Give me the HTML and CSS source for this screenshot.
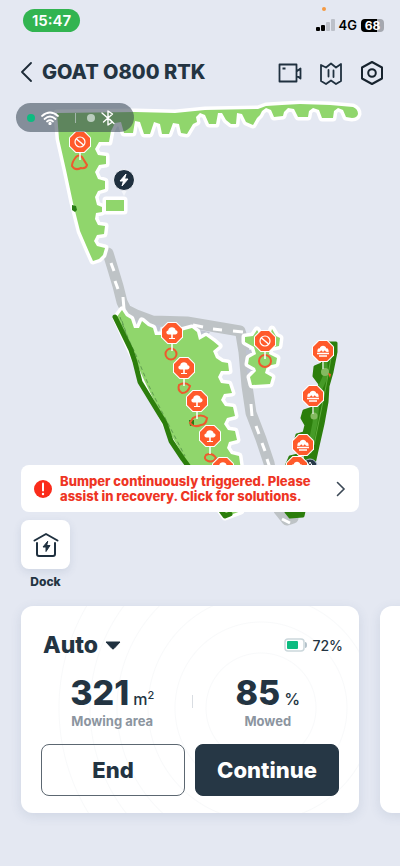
FILE: index.html
```html
<!DOCTYPE html>
<html lang="en">
<head>
    <meta charset="UTF-8">
    <meta name="viewport" content="width=device-width, initial-scale=1.0">
    <title>GOAT O800 RTK</title>
    <link rel="stylesheet" href="styles.css">
</head>
<body>
    <div class="status-bar">
        <span class="clock">15:47</span>
        <div class="status-right">
            <span class="mic-dot"></span>
            <div class="status-icons">
                <svg width="19" height="12" viewBox="0 0 19 12" aria-hidden="true">
                    <rect x="0" y="8" width="4" height="4" rx="1" fill="#000"/>
                    <rect x="5" y="6" width="4" height="6" rx="1" fill="#000"/>
                    <rect x="10" y="3" width="4" height="9" rx="1" fill="#bcc0c9"/>
                    <rect x="15" y="0" width="4" height="12" rx="1" fill="#bcc0c9"/>
                </svg>
                <span class="network">4G</span>
                <span class="phone-battery">68</span>
            </div>
        </div>
    </div>

    <header class="top-bar">
        <button class="icon-btn" aria-label="Back">
            <svg width="12" height="20" viewBox="0 0 12 20"><path d="M11 1 2 10l9 9" fill="none" stroke="#1d2b38" stroke-width="1.8" stroke-linecap="round" stroke-linejoin="round"/></svg>
        </button>
        <h1>GOAT O800 RTK</h1>
        <div class="actions">
            <button class="icon-btn" aria-label="Camera">
                <svg width="24" height="24" viewBox="0 0 24 24" fill="none" stroke="#1f303f" stroke-width="1.8" stroke-linejoin="round"><path d="M1.500 3.500h17v17h-17zM18.500 10.500l4-3v10l-4-3M4.500 7.500h3"/></svg>
            </button>
            <button class="icon-btn" aria-label="Map">
                <svg width="24" height="24" viewBox="0 0 24 24" fill="none" stroke="#1f303f" stroke-width="1.800" stroke-linejoin="round" stroke-linecap="round"><path d="M2 4l5 2.500 5-4 5 4L22 3v17l-5 3-5-3.500L7 23l-5-3z"/><path d="M9.500 9v6.500M14.500 9.500V16"/></svg>
            </button>
            <button class="icon-btn" aria-label="Settings">
                <svg width="24" height="26" viewBox="0 0 24 26" fill="none" stroke="#17232e" stroke-width="2" stroke-linejoin="round"><path d="M12 2l10 5.500v11L12 24 2 18.500v-11z"/><circle cx="12" cy="13" r="3.800"/></svg>
            </button>
        </div>
    </header>

    <main>
        <section class="map-area">
            <svg class="map" viewBox="0 96 400 434" role="img" aria-label="Lawn map">
                <defs>
                    <g id="sign">
                        <path d="M-4.500-11h9l6.500 6.500v9l-6.500 6.500h-9l-6.500-6.500v-9z" fill="#fff"/>
                        <path d="M-4-10h8l6 6v8l-6 6h-8l-6-6v-8z" fill="#ff5a2b"/>
                    </g>
                    <g id="sign-stop">
                        <path d="M0 9v9" stroke="#fff" stroke-width="1.500"/>
                        <use href="#sign"/>
                        <circle r="5" fill="none" stroke="#fff" stroke-width="1.200"/>
                        <path d="M-3.500-3 3.500 3" stroke="#fff" stroke-width="1.500"/>
                    </g>
                    <g id="sign-tree">
                        <path d="M0 9v9" stroke="#fff" stroke-width="1.500"/>
                        <use href="#sign"/>
                        <path d="M-.8 5V1.500H-3.500C-6.500 1-6-2.500-3.800-2.600-3.500-6.500 3-6.800 3.600-2.800 6.500-2.500 6 1.200 3.300 1.500H.8V5H3v1h-6V5z" fill="#fff"/>
                    </g>
                    <g id="sign-bush">
                        <path d="M0 9v9" stroke="#d6e6cf" stroke-width="1.500"/>
                        <use href="#sign"/>
                        <path d="M-5.500 1C-6-1-5-3-3.200-2.600-3-6 3-6 3.200-2.600 5-3 6-1 5.500 1L3 .8 1.800-.8 0 1-1.800-.8-3 .8z" fill="#fff"/>
                        <path d="M-6 2.500H6M-4 5H4" stroke="#fff" stroke-width="1.500"/>
                    </g>
                </defs>

                <!-- paths between the zones -->
                <g class="road">
                    <path d="M108 253l4 13 6 20 4 16 4 8 10 5 16 6 35 1 53 9"/>
                    <path d="M241 334l3 18 3 34 4 27 10 26 8 24 4 20 6 27 8 10 6-2"/>
                </g>
                <g class="road-line">
                    <path d="M111 263l3 8M115 281l3 8M123 297l1 12M193 325l10 2M213 329l9 1M233 331l10 1"/>
                    <path d="M251 404l1 12M256 426l3 8M262 443l3 8M267 459l3 9M282 519l8 4"/>
                </g>
                <g fill="#bec3d0">
                    <path d="M134 320l6 0-2 5-4 0zM153 325h8l-2 8h-5zM199 330l11 2-5 6-6-2zM246 350h6v4h-6zM247 369h7v4h-7z"/>
                </g>

                <!-- zones -->
                <g class="zone">
                    <path d="M57 113L135 112 175 113 205 110 258 109 266 106 282 105 300 104 330 105 353 107Q358 109 358 114 357 118 352 118L346 117 343 110 338 108 334 111 333 118 322 118 319 110 313 108 309 111 308 117 298 117 294 109 288 108 284 112 283 116 274 117 271 110 266 108 262 111 260 115 257 118 253 125 246 122 242 114 237 113 236 124 231 124 226 120 222 113 218 113 216 124 209 124 205 115 200 113 196 117 197 122 193 124 187 134 181 133 179 124 173 123 169 134 162 134 160 124 154 122 150 134 144 134 140 122 135 121 133 133 124 133 121 122 115 123 111 131 109 142 99 142 95 149 98 155 106 156 106 164 99 165 95 172 98 179 105 181 105 189 98 191 95 197 97 205 102 207 102 212 96 213 95 219 98 225 105 226 104 234 97 235 94 241 97 246 105 248 103 255 99 259 93 261 89 252 80 231 73 203 66 170 59 139z"/>
                    <path d="M106 200h18v11h-18z"/>
                    <path d="M122 310L126 316 131 319 134 328 139 328 142 321 148 326 153 328 155 335 163 335 171 329 181 331 192 328 197 332 199 340 206 336 213 341 219 346 213 351 216 358 222 362 228 363 229 371 221 371 218 377 221 383 229 384 232 393 224 394 221 400 225 406 233 407 235 416 227 418 224 424 228 430 235 431 237 440 229 442 227 448 231 454 239 456 241 470 241 511 225 517 216 504 190 467 170 433 145 382 116 318z"/>
                    <path d="M245 337L253 336 257 330 261 336 270 336 272 329 276 336 280 338 279 346 270 348 269 354 277 358 276 364 267 366 265 373 272 377 270 384 252 385 250 377 256 371 255 368 248 364 249 358 256 354 254 347 245 342z"/>
                </g>
                <g class="dotted"><path d="M122 321l6 17 8 17 13 31 12 24 24 46M120 317l8 22 6 12M170 440l14 23"/></g>
                <path class="hedge" d="M115 317l16 33 4 12 5 20 25 41 6 18 12 18 42 57 5-2"/>
                <path d="M72 205l4 1 1 4-2 2-3-2z" fill="#277c13"/>
                <path d="M189 420l5 0v5l-4 1z" fill="#277c13"/>

                <!-- mowed strip on the right -->
                <path d="M328 343L336 343 336 352 332 372 328 386 327 402 323 424 318 446 314 464 303 516 290 517 286 512 289 480 287 464 290 457 298 455 295 442 297 435 304 433 306 425 302 418 304 411 313 408 317 392 320 384 314 376 315 367 322 364z" fill="#2c7e0c" stroke="#2c7e0c" stroke-width="3" stroke-linejoin="round"/>
                <path d="M324 355l2 20-8 18-3 30-6 30" fill="none" stroke="#469b27" stroke-width="5"/>
                <path d="M331 358l-5 28-5 25-7 34" fill="none" stroke="#5ead3c" stroke-width="1"/>
                <g fill="#84ba60">
                    <circle cx="325" cy="372" r="4"/><circle cx="314" cy="416" r="3.500"/>
                </g>
                <path d="M328 373l3 1-1 4z" fill="#ff5a2b"/>
                <circle cx="310" cy="466" r="7" fill="#263949" stroke="#aebbd0"/>
                <path d="M306 469l4-7 4 7" fill="none" stroke="#fff"/>

                <!-- obstacles -->
                <g class="obstacle">
                    <path d="M76 157q3-3 6 0l5 8q-1 4-6 3-6 3-9-2 0-4 4-9z"/>
                    <circle cx="171" cy="354" r="5.500"/>
                    <path d="M179 385q6-4 11 1-2 7-8 7-5-3-3-8z"/>
                    <path d="M193 418q8-5 14 0-1 7-6 7-7 3-11-2z"/>
                    <path d="M206 455q6-3 10 3-3 5-8 3-5-2-2-6z"/>
                    <circle cx="265" cy="361" r="6"/>
                </g>
                <use href="#sign-stop" x="80" y="142"/>
                <use href="#sign-stop" x="265" y="341"/>
                <use href="#sign-tree" x="172" y="333"/>
                <use href="#sign-tree" x="184" y="368"/>
                <use href="#sign-tree" x="197" y="401"/>
                <use href="#sign-tree" x="210" y="436"/>
                <use href="#sign-tree" x="223" y="468"/>
                <use href="#sign-bush" x="323" y="351"/>
                <use href="#sign-bush" x="313" y="396"/>
                <use href="#sign-bush" x="303" y="445"/>
                <use href="#sign-bush" x="297" y="467"/>

                <!-- charging station -->
                <path d="M120 188l4 8 4-8z" fill="#f3f5fa"/>
                <circle cx="124" cy="180" r="10.500" fill="#1f303f" stroke="#f3f5fa"/>
                <path d="M126 174l-6 7h3.500l-1.500 5 6-7h-3.500z" fill="#fff" stroke="#fff" stroke-linejoin="round"/>
            </svg>

            <div class="overlay">
                <div class="connection">
                    <span class="dot online"></span>
                    <svg width="18" height="14" viewBox="0 0 18 14" fill="none" stroke="#fff" stroke-width="1.700" stroke-linecap="round"><path d="M1 5q8-7 16 0M3.500 8q5.500-5 11 0M6 10.500q3-2.500 6 0"/><circle cx="9" cy="12.500" r=".8" fill="#fff"/></svg>
                    <span class="split"></span>
                    <span class="dot"></span>
                    <svg width="14" height="16" viewBox="0 0 14 16" fill="none" stroke="#fff" stroke-width="1.400" stroke-linecap="round" stroke-linejoin="round"><path d="M2.500 12l9-8L7 1v14l4.500-3L9 9.500M1 3l12 10.500"/></svg>
                </div>

                <a class="notice" href="#solutions">
                    <svg width="18" height="18" viewBox="0 0 18 18"><circle cx="9" cy="9" r="9" fill="#fa2c1b"/><path d="M9 3.500v7" stroke="#fff" stroke-width="2" stroke-linecap="round"/><circle cx="9" cy="14" r="1.200" fill="#fff"/></svg>
                    <span class="notice-text">Bumper continuously triggered. Please assist in recovery. Click for solutions.</span>
                    <svg width="10" height="16" viewBox="0 0 10 16"><path d="M1.500 1.500 8 8l-6.500 6.500" fill="none" stroke="#3b4855" stroke-width="1.600" stroke-linecap="round"/></svg>
                </a>

                <button class="dock">
                    <span class="dock-icon">
                        <svg width="26" height="26" viewBox="0 0 26 26" fill="none" stroke="#1f303f" stroke-width="2" stroke-linecap="round" stroke-linejoin="round"><path d="M1.500 8.500 13 2l11.500 6.500M4 11v11q0 2 2 2h14q2 0 2-2V11"/><path d="M14.500 9.500 10 15h3v4.500l4-6h-3z" fill="#1f303f" stroke-width="1"/></svg>
                    </span>
                    Dock
                </button>
            </div>
        </section>

        <section class="cards">
            <article class="card">
                <div class="card-head">
                    <button class="mode">Auto
                        <svg width="16" height="9" viewBox="0 0 16 9"><path d="M1 1h14L9 7.500q-1 1-2 0z" fill="#1f303f" stroke="#1f303f" stroke-linejoin="round"/></svg>
                    </button>
                    <span class="battery">
                        <svg width="23" height="14" viewBox="0 0 23 14"><rect x="1" y="1" width="19" height="12" rx="3" fill="#fff" stroke="#ccd8dc" stroke-width="1.500"/><rect x="3" y="3" width="11" height="8" rx="1" fill="#0dbb80"/><path d="M21 4q2 0 2 3t-2 3z" fill="#b4c2ca"/></svg>
                        72%
                    </span>
                </div>
                <div class="stats">
                    <div class="stat">
                        <div><strong>321</strong><span class="unit">m<sup>2</sup></span></div>
                        <span class="label">Mowing area</span>
                    </div>
                    <span class="stat-split"></span>
                    <div class="stat">
                        <div><strong>85</strong><span class="unit">%</span></div>
                        <span class="label">Mowed</span>
                    </div>
                </div>
                <div class="buttons">
                    <button class="btn">End</button>
                    <button class="btn primary">Continue</button>
                </div>
            </article>
            <article class="card"></article>
        </section>
    </main>
</body>
</html>
```

FILE: styles.css
```css
* {
    box-sizing: border-box;
}

body {
    margin: 0;
    min-height: 100vh;
    background: #e4e8f2;
    color: #233442;
    font-family: Inter, "Liberation Sans", sans-serif;
    overflow-x: hidden;
}

button {
    padding: 0;
    border: none;
    background: none;
    color: inherit;
    font-family: inherit;
    cursor: pointer;
}

svg {
    display: block;
    flex-shrink: 0;
}

/* phone status bar */
.status-bar {
    display: flex;
    justify-content: space-between;
    align-items: flex-start;
    height: 52px;
    padding: 7px 16px 0 23px;
}

.clock {
    margin-top: 2px;
    padding: 0 9px;
    border-radius: 12px;
    background: #32b451;
    color: #fff;
    font-size: 15px;
    font-weight: 600;
    line-height: 23px;
}

.status-right {
    display: flex;
    flex-direction: column;
}

.mic-dot {
    width: 4px;
    height: 4px;
    margin-left: 6px;
    border-radius: 50%;
    background: #f59a44;
}

.status-icons {
    display: flex;
    align-items: center;
    gap: 4px;
    margin-top: 7px;
}

.network {
    color: #000;
    font-size: 13px;
    font-weight: 600;
    line-height: 14px;
}

.phone-battery {
    width: 23px;
    border-radius: 4px;
    background: linear-gradient(to right, #000 68%, #a5a8b0 68%);
    color: #fff;
    font-size: 12px;
    font-weight: 700;
    line-height: 13px;
    text-align: center;
}

/* title row */
.top-bar {
    display: flex;
    align-items: center;
    height: 40px;
    padding: 0 16px 0 20px;
}

.top-bar h1 {
    flex: 1;
    margin: 0 0 0 10px;
    font-size: 20px;
    font-weight: 800;
    line-height: 24px;
    white-space: nowrap;
}

.actions {
    display: flex;
    align-items: center;
    gap: 17px;
    padding-top: 2px;
}

/* map */
.map-area {
    display: grid;
    padding-top: 4px;
}

.map,
.overlay {
    grid-area: 1 / 1;
}

.map {
    width: 100%;
}

.zone {
    fill: #90d66c;
    stroke: #fff;
    stroke-width: 7;
    stroke-linejoin: round;
    paint-order: stroke;
}

.road {
    fill: none;
    stroke: #bec3c6;
    stroke-width: 11;
    stroke-linecap: round;
    stroke-linejoin: round;
}

.road-line {
    fill: none;
    stroke: #fff;
    stroke-width: 3;
}

.hedge {
    fill: none;
    stroke: #2c7e0c;
    stroke-width: 5;
    stroke-linecap: round;
    stroke-linejoin: round;
}

.dotted {
    fill: none;
    stroke: #5f9d50;
    stroke-dasharray: 4 3;
}

.obstacle {
    fill: none;
    stroke: #ee5a2d;
    stroke-width: 2;
}

.overlay {
    position: relative;
    display: flex;
    flex-direction: column;
    align-items: flex-start;
    padding: 7px 41px 0 16px;
}

.connection {
    display: flex;
    align-items: center;
    gap: 6px;
    width: 118px;
    height: 29px;
    padding: 0 11px;
    border-radius: 15px;
    background: rgba(52, 67, 82, 0.55);
}

.dot {
    width: 8px;
    height: 8px;
    border-radius: 50%;
    background: #bacdbe;
}

.dot.online {
    background: #0dbb80;
}

.split {
    width: 1px;
    height: 10px;
    margin: 0 5px 0 10px;
    background: #a3b7ab;
}

.notice {
    display: flex;
    align-items: center;
    align-self: stretch;
    gap: 8px;
    height: 47px;
    margin: 333px 0 0 5px;
    padding: 0 13px;
    border-radius: 8px;
    background: #fff;
    text-decoration: none;
}

.notice-text {
    flex: 1;
    color: #ee3524;
    font-size: 13px;
    font-weight: 800;
    line-height: 15px;
}

.dock {
    display: flex;
    flex-direction: column;
    align-items: center;
    gap: 5px;
    margin: 8px 0 0 5px;
    font-size: 12px;
    font-weight: 800;
    line-height: 16px;
}

.dock-icon {
    display: grid;
    place-items: center;
    width: 49px;
    height: 49px;
    border-radius: 8px;
    background: #fff;
    box-shadow: 0 3px 8px rgba(60, 80, 120, 0.12);
}

/* mowing cards */
.cards {
    display: flex;
    gap: 21px;
    padding: 16px 0 53px 21px;
    overflow: hidden;
}

.card {
    flex: 0 0 calc(100% - 41px);
    padding: 24px 20px 17px;
    border-radius: 12px;
    background: #fff;
    box-shadow: 0 3px 12px rgba(60, 80, 120, 0.12);
}

.card:first-child {
    background: radial-gradient(circle at 240px 102px,
        #fff 54px, #f8f9fa 55px, #fff 56px,
        #fff 85px, #f8f9fa 86px, #fff 87px,
        #fff 112px, #f8f9fa 113px, #fff 114px,
        #fff 143px, #f8f9fa 144px, #fff 145px,
        #fff 170px, #f8f9fa 171px, #fff 172px,
        #fff 201px, #f8f9fa 202px, #fff 203px);
}

.card-head {
    display: flex;
    justify-content: space-between;
    align-items: center;
    margin-right: -4px;
    padding-left: 2px;
}

.mode {
    display: flex;
    align-items: center;
    gap: 7px;
    font-size: 23px;
    font-weight: 800;
    line-height: 30px;
}

.battery {
    display: flex;
    align-items: center;
    gap: 5px;
    font-size: 14px;
    font-weight: 500;
}

.stats {
    display: flex;
    align-items: center;
    margin-top: 13px;
}

.stat {
    flex: 1;
    text-align: center;
}

.stat:first-child {
    padding-right: 8px;
}

.stat:last-child {
    padding-left: 4px;
}

.stat strong {
    font-size: 34px;
    font-weight: 800;
    line-height: 40px;
}

.unit {
    margin-left: 4px;
    font-size: 16px;
    font-weight: 500;
}

.unit sup {
    font-size: 11px;
    line-height: 0;
}

.label {
    display: block;
    color: #8c959f;
    font-size: 13px;
    font-weight: 700;
    line-height: 17px;
}

.stat-split {
    width: 1px;
    height: 13px;
    background: #d9dde2;
}

.buttons {
    display: flex;
    gap: 10px;
    margin-top: 14px;
}

.btn {
    flex: 1;
    height: 52px;
    border: 1px solid #5c6771;
    border-radius: 8px;
    background: transparent;
    font-size: 22px;
    font-weight: 800;
}

.btn.primary {
    border-color: #263745;
    background: #263745;
    color: #fff;
}
```
